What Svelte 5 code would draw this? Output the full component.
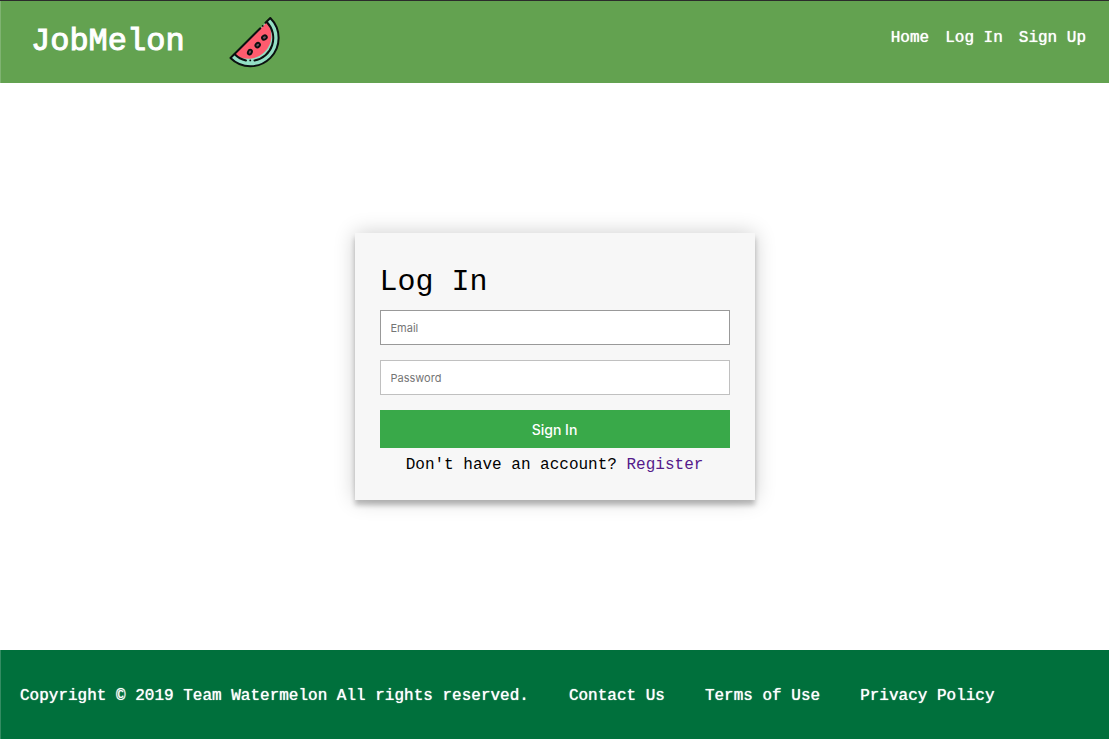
<script lang="ts">
  const navLinks = ['Home', 'Log In', 'Sign Up'];
  const footerLinks = ['Contact Us', 'Terms of Use', 'Privacy Policy'];
  let email = $state('');
  let password = $state('');
</script>

<div class="page">
  <header>
    <div class="brand">
      <span class="name">JobMelon</span>
      <svg class="logo" viewBox="0 0 52 52" aria-hidden="true">
        <path d="M41.300 2 A28.200 28.200 0 0 1 1.500 42 Z" fill="#94dfc5" />
        <path d="M38 6.200 A23 23 0 0 1 5.700 38.200 Z" fill="#ff5b6e" />
        <path d="M17 44.500h8.500" stroke="#94dfc5" stroke-width="1.500" />
        <g fill="none" stroke="#0b1010" stroke-width="2" stroke-linecap="round" stroke-linejoin="round">
          <path d="M36.500 6.800 L41.300 2 A28.200 28.200 0 0 1 1.500 42 L31.300 12.200" />
          <path d="M38 6.200 A23 23 0 0 1 25.500 44.600" />
          <path d="M5.700 38.200 A23 23 0 0 0 17 44.500" />
          <path d="M21.200 44.400h.1M33.600 9.900h.1" stroke-width="1.800" />
        </g>
        <g fill="#785063" stroke="#0b1010" stroke-width="1.900">
          <ellipse cx="20.900" cy="36.100" rx="1.900" ry="2.500" transform="rotate(25 20.900 36.100)" />
          <ellipse cx="28.700" cy="29.100" rx="2" ry="2.400" transform="rotate(45 28.700 29.100)" />
          <ellipse cx="35.400" cy="21.500" rx="2" ry="2.500" transform="rotate(60 35.400 21.500)" />
        </g>
      </svg>
    </div>
    <nav>
      {#each navLinks as label}
        <a href="#top">{label}</a>
      {/each}
    </nav>
  </header>

  <main>
    <form class="card" onsubmit={(e) => e.preventDefault()}>
      <h1>Log In</h1>
      <input class="email" type="email" placeholder="Email" aria-label="Email" bind:value={email} />
      <input type="password" placeholder="Password" aria-label="Password" bind:value={password} />
      <button type="submit">Sign In</button>
      <p>Don't have an account? <a href="#register">Register</a></p>
    </form>
  </main>

  <footer>
    <span>Copyright © 2019 Team Watermelon All rights reserved.</span>
    {#each footerLinks as label}
      <a href="#info">{label}</a>
    {/each}
  </footer>
</div>

<style>
  :global(body) {
    margin: 0;
    background: #fff;
  }
  .page {
    min-height: 100vh;
    box-sizing: border-box;
    display: flex;
    flex-direction: column;
    border-top: 1px solid #2b2b2b;
    font: 16px/24px 'Liberation Mono', monospace;
    color: #000;
  }
  a {
    text-decoration: none;
  }
  header {
    display: flex;
    justify-content: space-between;
    align-items: flex-start;
    padding: 15px 23px 15px 30px;
    border-left: 1px solid #7fb371;
    background: #63a250;
    color: #fff;
  }
  .brand {
    display: flex;
    align-items: center;
    gap: 44px;
  }
  .name {
    font-size: 32px;
    line-height: 48px;
    font-weight: 400;
    -webkit-text-stroke: 1px #fff;
  }
  .logo {
    width: 52px;
    height: 52px;
  }
  nav {
    display: flex;
    gap: 16px;
    padding-top: 10px;
  }
  nav a,
  footer {
    color: #fff;
    text-shadow: 0 0 1px #fff;
  }
  main {
    flex: 1;
    display: flex;
    align-items: center;
    justify-content: center;
  }
  .card {
    box-sizing: border-box;
    width: 100%;
    max-width: 400px;
    padding: 25px;
    display: flex;
    flex-direction: column;
    background: #f7f7f7;
    box-shadow: 0 0 20px rgba(0, 0, 0, 0.2), 0 5px 5px rgba(0, 0, 0, 0.24);
  }
  h1 {
    margin: 0;
    padding-bottom: 4px;
    font-size: 30px;
    line-height: 48px;
    font-weight: 400;
  }
  input {
    box-sizing: border-box;
    height: 35px;
    margin: 0 0 15px;
    padding: 0 10px;
    border: 1px solid #c0c0c0;
    border-radius: 0;
    background: #fff;
    font: 11px Inter, sans-serif;
    outline: none;
  }
  .email {
    border-color: #999;
  }
  input::placeholder {
    color: #757575;
    opacity: 1;
  }
  button {
    height: 38px;
    padding: 0;
    border: 0;
    background: #39a949;
    color: #fff;
    font: 500 14px Inter, sans-serif;
    cursor: pointer;
  }
  p {
    margin: 0;
    padding-top: 5px;
    line-height: 24px;
    margin-bottom: -2px;
    text-align: center;
  }
  p a {
    color: #551a8b;
  }
  footer {
    display: flex;
    flex-wrap: wrap;
    gap: 0 40px;
    padding: 34px 19px 31px;
    border-left: 1px solid #338c62;
    background: #00703c;
  }
  footer a {
    color: inherit;
  }
</style>
